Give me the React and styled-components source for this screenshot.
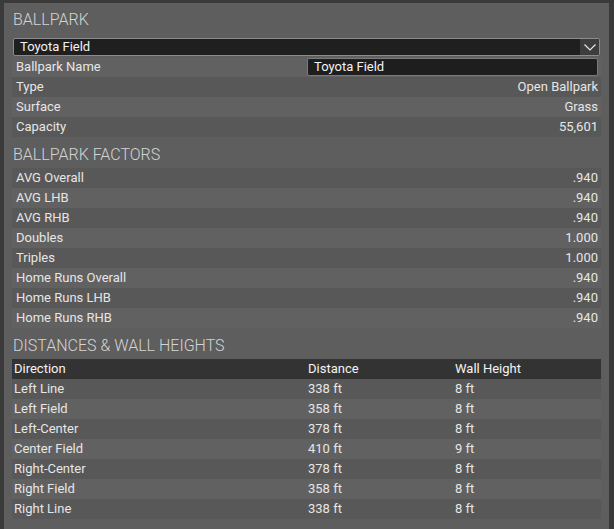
import React from 'react';
import styled, { createGlobalStyle } from 'styled-components';

const GlobalStyle = createGlobalStyle`
    html, body {
        margin: 0;
        background: #3a3a3a;
    }
    body {
        font-family: Roboto, "Liberation Sans", sans-serif;
        color: #e6e6e6;
    }
`;

const Frame = styled.div`
    width: 614px;
    height: 529px;
    padding: 3px 5px 0 4px;
    box-sizing: border-box;
    overflow: hidden;
`;

const Panel = styled.div`
    height: 100%;
    background: #5e5e5e;
    padding: 0 8px;
    box-sizing: border-box;
`;

const Title = styled.h2`
    margin: 0;
    padding: ${(p) => (p.$first ? '6px 0 6px 1px' : '7px 0 2px 1px')};
    font-size: 16px;
    line-height: 22px;
    font-weight: 300;
    color: #d4d4d4;
    letter-spacing: 0;
`;

const Select = styled.div`
    margin: 1px 1px 1px 1px;
    height: 18px;
    box-sizing: border-box;
    display: flex;
    align-items: stretch;
    background: #1f1f1f;
    border: 1px solid #8c8c8c;
    border-radius: 2px;
    font-size: 13px;
    color: #f2f2f2;
`;

const SelectText = styled.span`
    flex: 1;
    padding-left: 6px;
    line-height: 16px;
`;

const Chevron = styled.span`
    width: 19px;
    display: flex;
    align-items: center;
    justify-content: center;
    background: #3d3d3d;
`;

const Row = styled.div`
    height: 20px;
    display: flex;
    align-items: center;
    justify-content: space-between;
    padding: 0 3px 0 4px;
    background: ${(p) => (p.$dark ? '#585858' : '#616161')};
    font-size: 13px;
    line-height: 20px;
`;

const Input = styled.div`
    width: 291px;
    height: 18px;
    box-sizing: border-box;
    background: #1e1e1e;
    border: 1px solid #7a7a7a;
    border-radius: 2px;
    padding-left: 6px;
    line-height: 16px;
    color: #f2f2f2;
`;

const Table = styled.div`
    display: flex;
    flex-direction: column;
`;

const TableRow = styled.div`
    display: grid;
    grid-template-columns: 294px 147px 1fr;
    height: 20px;
    align-items: center;
    padding-left: 2px;
    font-size: 13px;
    line-height: 20px;
    background: ${(p) => (p.$head ? '#333333' : p.$dark ? '#585858' : '#616161')};
    color: ${(p) => (p.$head ? '#f4f4f4' : '#e6e6e6')};
`;

const ballpark = [
    ['Type', 'Open Ballpark'],
    ['Surface', 'Grass'],
    ['Capacity', '55,601'],
];

const factors = [
    ['AVG Overall', '.940'],
    ['AVG LHB', '.940'],
    ['AVG RHB', '.940'],
    ['Doubles', '1.000'],
    ['Triples', '1.000'],
    ['Home Runs Overall', '.940'],
    ['Home Runs LHB', '.940'],
    ['Home Runs RHB', '.940'],
];

const distances = [
    ['Left Line', '338 ft', '8 ft'],
    ['Left Field', '358 ft', '8 ft'],
    ['Left-Center', '378 ft', '8 ft'],
    ['Center Field', '410 ft', '9 ft'],
    ['Right-Center', '378 ft', '8 ft'],
    ['Right Field', '358 ft', '8 ft'],
    ['Right Line', '338 ft', '8 ft'],
];

const App = () => {
    return (
        <Frame>
            <GlobalStyle />
            <Panel>
                <Title $first>BALLPARK</Title>
                <Select>
                    <SelectText>Toyota Field</SelectText>
                    <Chevron>
                        <svg width='12' height='7' viewBox='0 0 12 7'>
                            <polyline points='0.5,0.5 6,6 11.5,0.5' fill='none' stroke='#e8e8e8' strokeWidth='1.2' />
                        </svg>
                    </Chevron>
                </Select>
                <Row>
                    <span>Ballpark Name</span>
                    <Input>Toyota Field</Input>
                </Row>
                {ballpark.map(([k, v], i) => (
                    <Row key={k} $dark={i % 2 === 0}>
                        <span>{k}</span>
                        <span>{v}</span>
                    </Row>
                ))}

                <Title>BALLPARK FACTORS</Title>
                {factors.map(([k, v], i) => (
                    <Row key={k} $dark={i % 2 === 0}>
                        <span>{k}</span>
                        <span>{v}</span>
                    </Row>
                ))}

                <Title>DISTANCES &amp; WALL HEIGHTS</Title>
                <Table>
                    <TableRow $head>
                        <span>Direction</span>
                        <span>Distance</span>
                        <span>Wall Height</span>
                    </TableRow>
                    {distances.map(([d, dist, h], i) => (
                        <TableRow key={d} $dark={i % 2 === 0}>
                            <span>{d}</span>
                            <span>{dist}</span>
                            <span>{h}</span>
                        </TableRow>
                    ))}
                </Table>
            </Panel>
        </Frame>
    );
};

export default App;
